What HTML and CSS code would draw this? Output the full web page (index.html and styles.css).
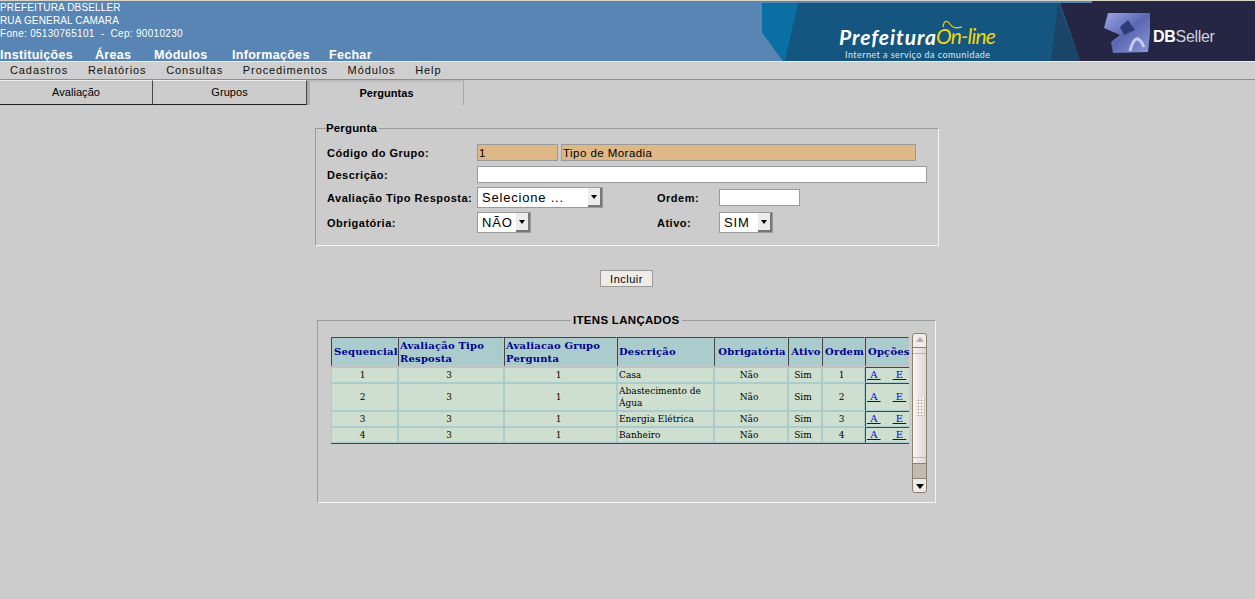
FILE: index.html
```html
<!DOCTYPE html>
<html lang="pt-BR">

<head>
  <meta charset="UTF-8">
  <title>Perguntas</title>
  <link rel="stylesheet" href="styles.css">
</head>

<body>
  <div id="topo">
    <div class="endereco">
      <p>PREFEITURA DBSELLER</p>
      <p>RUA GENERAL CAMARA</p>
      <p class="fone">Fone: 05130765101 &nbsp;- &nbsp;Cep: 90010230</p>
      <nav class="menu1">
        <a>Instituições</a>
        <a>Áreas</a>
        <a>Módulos</a>
        <a>Informações</a>
        <a>Fechar</a>
      </nav>
    </div>
    <div class="banner">
      <svg width="493" height="58" viewBox="0 0 493 58">
        <defs>
          <linearGradient id="logo" x1="0" y1="0" x2="1" y2="1">
            <stop offset="0" stop-color="#9aa6e4"></stop>
            <stop offset="0.5" stop-color="#5a68b4"></stop>
            <stop offset="1" stop-color="#8d9ad8"></stop>
          </linearGradient>
        </defs>
        <polygon points="0,0 298,0 318,58 21,58 0,29" fill="#14567f"></polygon>
        <polygon points="0,0 36,0 23,58 21,58 0,29" fill="#0a6fa2"></polygon>
        <polygon points="296,0 289,58 318,58" fill="#1b4567"></polygon>
        <polygon points="298,0 493,0 493,58 318,58" fill="#252643"></polygon>
        <polygon points="346,10 388,10 388,30 386,49 351,50 349,39 358,32 342,25" fill="url(#logo)"></polygon>
        <polygon points="358,24 366,17 373,27 362,32" fill="#2f3a78"></polygon>
        <path d="M368 48 C371 36 376 30 382 44" fill="none" stroke="#c5cdec" stroke-width="3"></path>
      </svg>
      <span class="pref">Prefeitura</span>
      <span class="online">On-line</span>
      <svg class="onda" width="24" height="12" viewBox="0 0 24 12"><path d="M2 7 C3 0 6 0 9 4 C12 9 16 8 21 7" fill="none" stroke="#f2d50f" stroke-width="1.2"></path></svg>
      <span class="slogan">Internet a serviço da comunidade</span>
      <span class="dbs"><b>DB</b>Seller</span>
    </div>
  </div>

  <nav class="menu2">
    <a>Cadastros</a>
    <a>Relatórios</a>
    <a>Consultas</a>
    <a>Procedimentos</a>
    <a>Módulos</a>
    <a>Help</a>
  </nav>

  <div class="abas">
    <a class="aba">Avaliação</a>
    <a class="aba">Grupos</a>
    <a class="aba ativa">Perguntas</a>
  </div>

  <div class="conteudo">
    <fieldset class="form">
      <legend>Pergunta</legend>
      <div class="linha l1">
        <label>Código do Grupo:</label>
        <input class="ro cod" type="text" value="1">
        <input class="ro nome" type="text" value="Tipo de Moradia">
      </div>
      <div class="linha l2">
        <label>Descrição:</label>
        <input class="desc" type="text">
      </div>
      <div class="linha l3">
        <label>Avaliação Tipo Resposta:</label>
        <span class="sel s-tipo">Selecione ...<i></i></span>
        <label class="dir">Ordem:</label>
        <input class="ordem" type="text">
      </div>
      <div class="linha l4">
        <label>Obrigatória:</label>
        <span class="sel s-nao">NÃO<i></i></span>
        <label class="dir">Ativo:</label>
        <span class="sel s-sim">SIM<i></i></span>
      </div>
    </fieldset>

    <button class="incluir" type="button">Incluir</button>

    <fieldset class="itens">
      <legend>ITENS LANÇADOS</legend>
      <div class="grade">
        <table>
          <thead>
            <tr>
              <th class="c1">Sequencial</th>
              <th class="c2 esq">Avaliação Tipo Resposta</th>
              <th class="c3 esq">Avaliacao Grupo Pergunta</th>
              <th class="c4 esq">Descrição</th>
              <th class="c5">Obrigatória</th>
              <th class="c6">Ativo</th>
              <th class="c7">Ordem</th>
              <th class="c8">Opções</th>
            </tr>
          </thead>
          <tbody>
            <tr>
              <td>1</td><td>3</td><td>1</td><td class="esq">Casa</td><td>Não</td><td>Sim</td><td>1</td>
              <td class="op"><a>&nbsp;A&nbsp;</a><a>&nbsp;E&nbsp;</a></td>
            </tr>
            <tr>
              <td>2</td><td>3</td><td>1</td><td class="esq">Abastecimento de Água</td><td>Não</td><td>Sim</td><td>2</td>
              <td class="op"><a>&nbsp;A&nbsp;</a><a>&nbsp;E&nbsp;</a></td>
            </tr>
            <tr>
              <td>3</td><td>3</td><td>1</td><td class="esq">Energia Elétrica</td><td>Não</td><td>Sim</td><td>3</td>
              <td class="op"><a>&nbsp;A&nbsp;</a><a>&nbsp;E&nbsp;</a></td>
            </tr>
            <tr>
              <td>4</td><td>3</td><td>1</td><td class="esq">Banheiro</td><td>Não</td><td>Sim</td><td>4</td>
              <td class="op"><a>&nbsp;A&nbsp;</a><a>&nbsp;E&nbsp;</a></td>
            </tr>
          </tbody>
        </table>
        <div class="rolagem">
          <span class="seta cima"></span>
          <span class="trilho"><span class="pega"></span></span>
          <span class="fim"></span>
          <span class="seta baixo"></span>
        </div>
      </div>
    </fieldset>
  </div>
</body>

</html>
```

FILE: styles.css
```css
html, body {
  height: 100%;
}

body {
  margin: 0;
  overflow: hidden;
  background: #cccccc;
  font-family: "Liberation Sans", Arial, sans-serif;
  color: #000;
}

p {
  margin: 0;
}

/* topo */
#topo {
  height: 60px;
  border-top: 1px solid #d8d4c8;
  border-bottom: 1px solid #eeeeee;
  background: #5985b4;
  display: flex;
  justify-content: space-between;
  box-sizing: content-box;
}

.endereco {
  color: #fff;
  font-size: 10px;
  letter-spacing: 0.15px;
}

.endereco p {
  height: 13px;
  line-height: 13px;
}

.endereco .fone {
  letter-spacing: 0.3px;
}

.menu1 {
  display: flex;
  margin-top: 8px;
  font-size: 12.5px;
  font-weight: bold;
  letter-spacing: 0.3px;
  line-height: 14px;
  height: 14px;
}

.menu1 a:nth-child(1) { width: 95px; }
.menu1 a:nth-child(2) { width: 59px; }
.menu1 a:nth-child(3) { width: 78px; }
.menu1 a:nth-child(4) { width: 97px; }

.banner {
  position: relative;
  width: 493px;
  height: 58px;
  margin-top: 2px;
}

/* faixa escura acima do logo */
.banner::before {
  content: "";
  position: absolute;
  left: 330px;
  right: 0;
  top: -2px;
  height: 2px;
  background: #252643;
}

.banner svg {
  display: block;
}

.banner span {
  position: absolute;
}

.pref {
  left: 77px;
  top: 24px;
  color: #fff;
  font: italic bold 21px/20px Lato, sans-serif;
  letter-spacing: 0.95px;
}

.online {
  left: 174px;
  top: 23px;
  color: #f2d50f;
  font: italic 21px/20px Lato, sans-serif;
  letter-spacing: -0.8px;
}

.banner .onda {
  position: absolute;
  left: 179px;
  top: 17px;
}

.slogan {
  left: 83px;
  top: 47px;
  color: #dfe6ec;
  font: 9px/10px Lato, sans-serif;
  letter-spacing: 0.45px;
}

.dbs {
  left: 391px;
  top: 25px;
  color: #cfd1de;
  font-size: 16px;
  line-height: 18px;
  letter-spacing: -0.3px;
}

.dbs b {
  color: #fff;
}

/* menu */
.menu2 {
  display: flex;
  gap: 19.7px;
  height: 17px;
  padding-left: 10px;
  border-bottom: 1px solid #8e8e8e;
  background: #cfcfcf;
  font-size: 11px;
  line-height: 17px;
  letter-spacing: 0.9px;
  color: #111;
}

/* abas */
.abas {
  display: flex;
  height: 25px;
}

.aba {
  box-sizing: border-box;
  width: 153px;
  height: 25px;
  border-top: 1px solid #eee;
  border-right: 1px solid #444;
  border-bottom: 1px solid #222;
  font-size: 11px;
  line-height: 23px;
  letter-spacing: 0.05px;
  text-align: center;
}

.aba:nth-child(2) {
  width: 154px;
}

.aba.ativa {
  width: 157px;
  border: 0;
  border-left: 3px solid #aaa;
  border-top: 2px solid #bdbdbd;
  border-right: 1px solid #a8a8a8;
  font-weight: bold;
  line-height: 22px;
}

/* formulario */
.conteudo {
  display: flex;
  flex-direction: column;
  align-items: center;
}

fieldset {
  margin: 0;
  box-sizing: border-box;
  border: 1px solid #9a9a9a;
  border-right-color: #f4f4f4;
  border-bottom-color: #f4f4f4;
}

.form {
  width: 624px;
  height: 124px;
  margin-top: 17px;
  margin-left: -1px;
  padding: 0 0 0 11px;
}

.form legend {
  padding: 0 2px 0 0;
  margin-left: -1px;
  font-size: 11.5px;
  font-weight: bold;
  line-height: 13px;
  letter-spacing: 0.15px;
}

.linha {
  display: flex;
  align-items: center;
  font-size: 11px;
  font-weight: bold;
}

.linha label {
  width: 150px;
  flex: none;
  letter-spacing: 0.5px;
}

.l1 { height: 17px; margin-top: 9px; }
.l2 { height: 17px; margin-top: 5px; }
.l3 { height: 21px; margin-top: 4px; }
.l4 { height: 21px; margin-top: 4px; }

input {
  box-sizing: border-box;
  margin: 0;
  padding: 1px 1px 0;
  height: 17px;
  border: 1px solid #9a9a9a;
  background: #fff;
  font: 11.5px "Liberation Sans", Arial, sans-serif;
  letter-spacing: 0.45px;
  border-radius: 0;
  outline: 0;
}

.ro {
  background: #deb887;
}

.cod { width: 81px; margin-right: 3px; }
.nome { width: 355px; }
.desc { width: 450px; }
.ordem { width: 81px; }

.linha .dir {
  width: 62px;
  margin-left: 54px;
}

.sel {
  box-sizing: border-box;
  display: inline-block;
  position: relative;
  flex: none;
  height: 21px;
  padding-left: 4px;
  border: 1px solid #9a9a9a;
  background: #fff;
  font-size: 13px;
  font-weight: normal;
  line-height: 19px;
  letter-spacing: 0.8px;
}

.sel i {
  position: absolute;
  right: 0;
  top: 0;
  width: 14px;
  height: 19px;
  box-sizing: border-box;
  background: #ececec;
  border-right: 2px solid #777;
  border-bottom: 2px solid #777;
}

.sel i::after {
  content: "";
  position: absolute;
  left: 3px;
  top: 7px;
  border: 3px solid transparent;
  border-top: 4px solid #000;
  border-bottom: 0;
}

.s-tipo { width: 126px; }
.s-nao { width: 54px; }
.s-sim { width: 54px; }
.l4 .dir { margin-left: 126px; }

.incluir {
  box-sizing: border-box;
  width: 53px;
  height: 17px;
  margin: 24px 0 0 -2px;
  padding: 0;
  border: 1px solid #9a9a9a;
  background: #efebe7;
  color: #000;
  font: 11px "Liberation Sans", Arial, sans-serif;
  letter-spacing: 0.5px;
  border-radius: 0;
}

.itens {
  width: 619px;
  height: 189px;
  margin-top: 27px;
  margin-left: -2px;
  padding: 0 0 0 13px;
}

.itens legend {
  margin-left: 239px;
  padding: 0 3px;
  font-size: 11.5px;
  font-weight: bold;
  line-height: 13px;
  letter-spacing: 0.3px;
}

.grade {
  display: flex;
  margin-top: 6px;
  align-items: flex-start;
}

/* tabela */
table {
  width: 578px;
  margin-top: 4px;
  table-layout: fixed;
  border-collapse: separate;
  border-spacing: 0;
  border-bottom: 1px solid #444;
  font-family: "DejaVu Serif", serif;
  font-size: 9px;
}

th {
  height: 30px;
  padding: 0 0 0 2px;
  box-sizing: border-box;
  background: #aacccc;
  border-top: 1px solid #444;
  border-left: 1px solid #444;
  border-bottom: 2px solid #c4c4c4;
  border-right: 1px solid #c4c4c4;
  color: #00008b;
  font-weight: bold;
  font-size: 10px;
  line-height: 13px;
  letter-spacing: 0.2px;
  text-align: center;
}

th.esq {
  padding-left: 1px;
  text-align: left;
}

.c1 { width: 67px; }
.c2 { width: 106px; }
.c3 { width: 113px; }
.c4 { width: 97px; }
.c5 { width: 74px; }
.c6 { width: 34px; }
.c7 { width: 43px; }
.c8 { width: 44px; }

td {
  height: 16px;
  padding: 0 4px 0 0;
  box-sizing: border-box;
  background: #cfdfcf;
  border: 1px solid #aacccc;
  line-height: 12px;
  text-align: center;
}

td.esq {
  padding: 0 1px;
  text-align: left;
}

td.op {
  padding: 0 0 0 1px;
  border-top: 1px solid #444;
  border-left: 1px solid #444;
  border-right: 0;
  white-space: nowrap;
  text-align: left;
}

td.op a {
  color: #0000ee;
  text-decoration: underline;
  font-size: 10px;
}

td.op a + a {
  margin-left: 12px;
}

tbody tr:nth-child(2) td {
  height: 28px;
}

/* barra de rolagem */
.rolagem {
  display: flex;
  flex-direction: column;
  box-sizing: border-box;
  width: 15px;
  height: 160px;
  margin-left: 3px;
  border: 1px solid #8c8070;
  border-radius: 3px;
  background: #efebe7;
}

.seta {
  height: 13px;
  flex: none;
  position: relative;
}

.seta::after {
  content: "";
  position: absolute;
  left: 3px;
  border: 4px solid transparent;
}

.cima::after {
  top: 3px;
  border-top: 0;
  border-bottom: 5px solid #b9b0a4;
}

.baixo::after {
  top: 5px;
  border-bottom: 0;
  border-top: 5px solid #000;
}

.trilho {
  flex: 1;
  display: block;
  background: linear-gradient(to right, #f6f4f1, #dcd7d1);
  border-top: 1px solid #8c8070;
  position: relative;
}

.trilho::before,
.trilho::after {
  content: "";
  position: absolute;
  left: 0;
  right: 0;
  height: 1px;
  background: #bdb6ac;
}

.trilho::before { top: 5px; }
.trilho::after { bottom: 5px; }

.pega {
  position: absolute;
  left: 3px;
  top: 50px;
  width: 9px;
  height: 18px;
  background-image: radial-gradient(circle at 1px 1px, #fbfaf8 1px, #cfc9c1 1px);
  background-size: 3px 3px;
}

.fim {
  height: 14px;
  flex: none;
  background: #c4bbb0;
  border-top: 1px solid #8c8070;
  border-bottom: 1px solid #8c8070;
}
```
